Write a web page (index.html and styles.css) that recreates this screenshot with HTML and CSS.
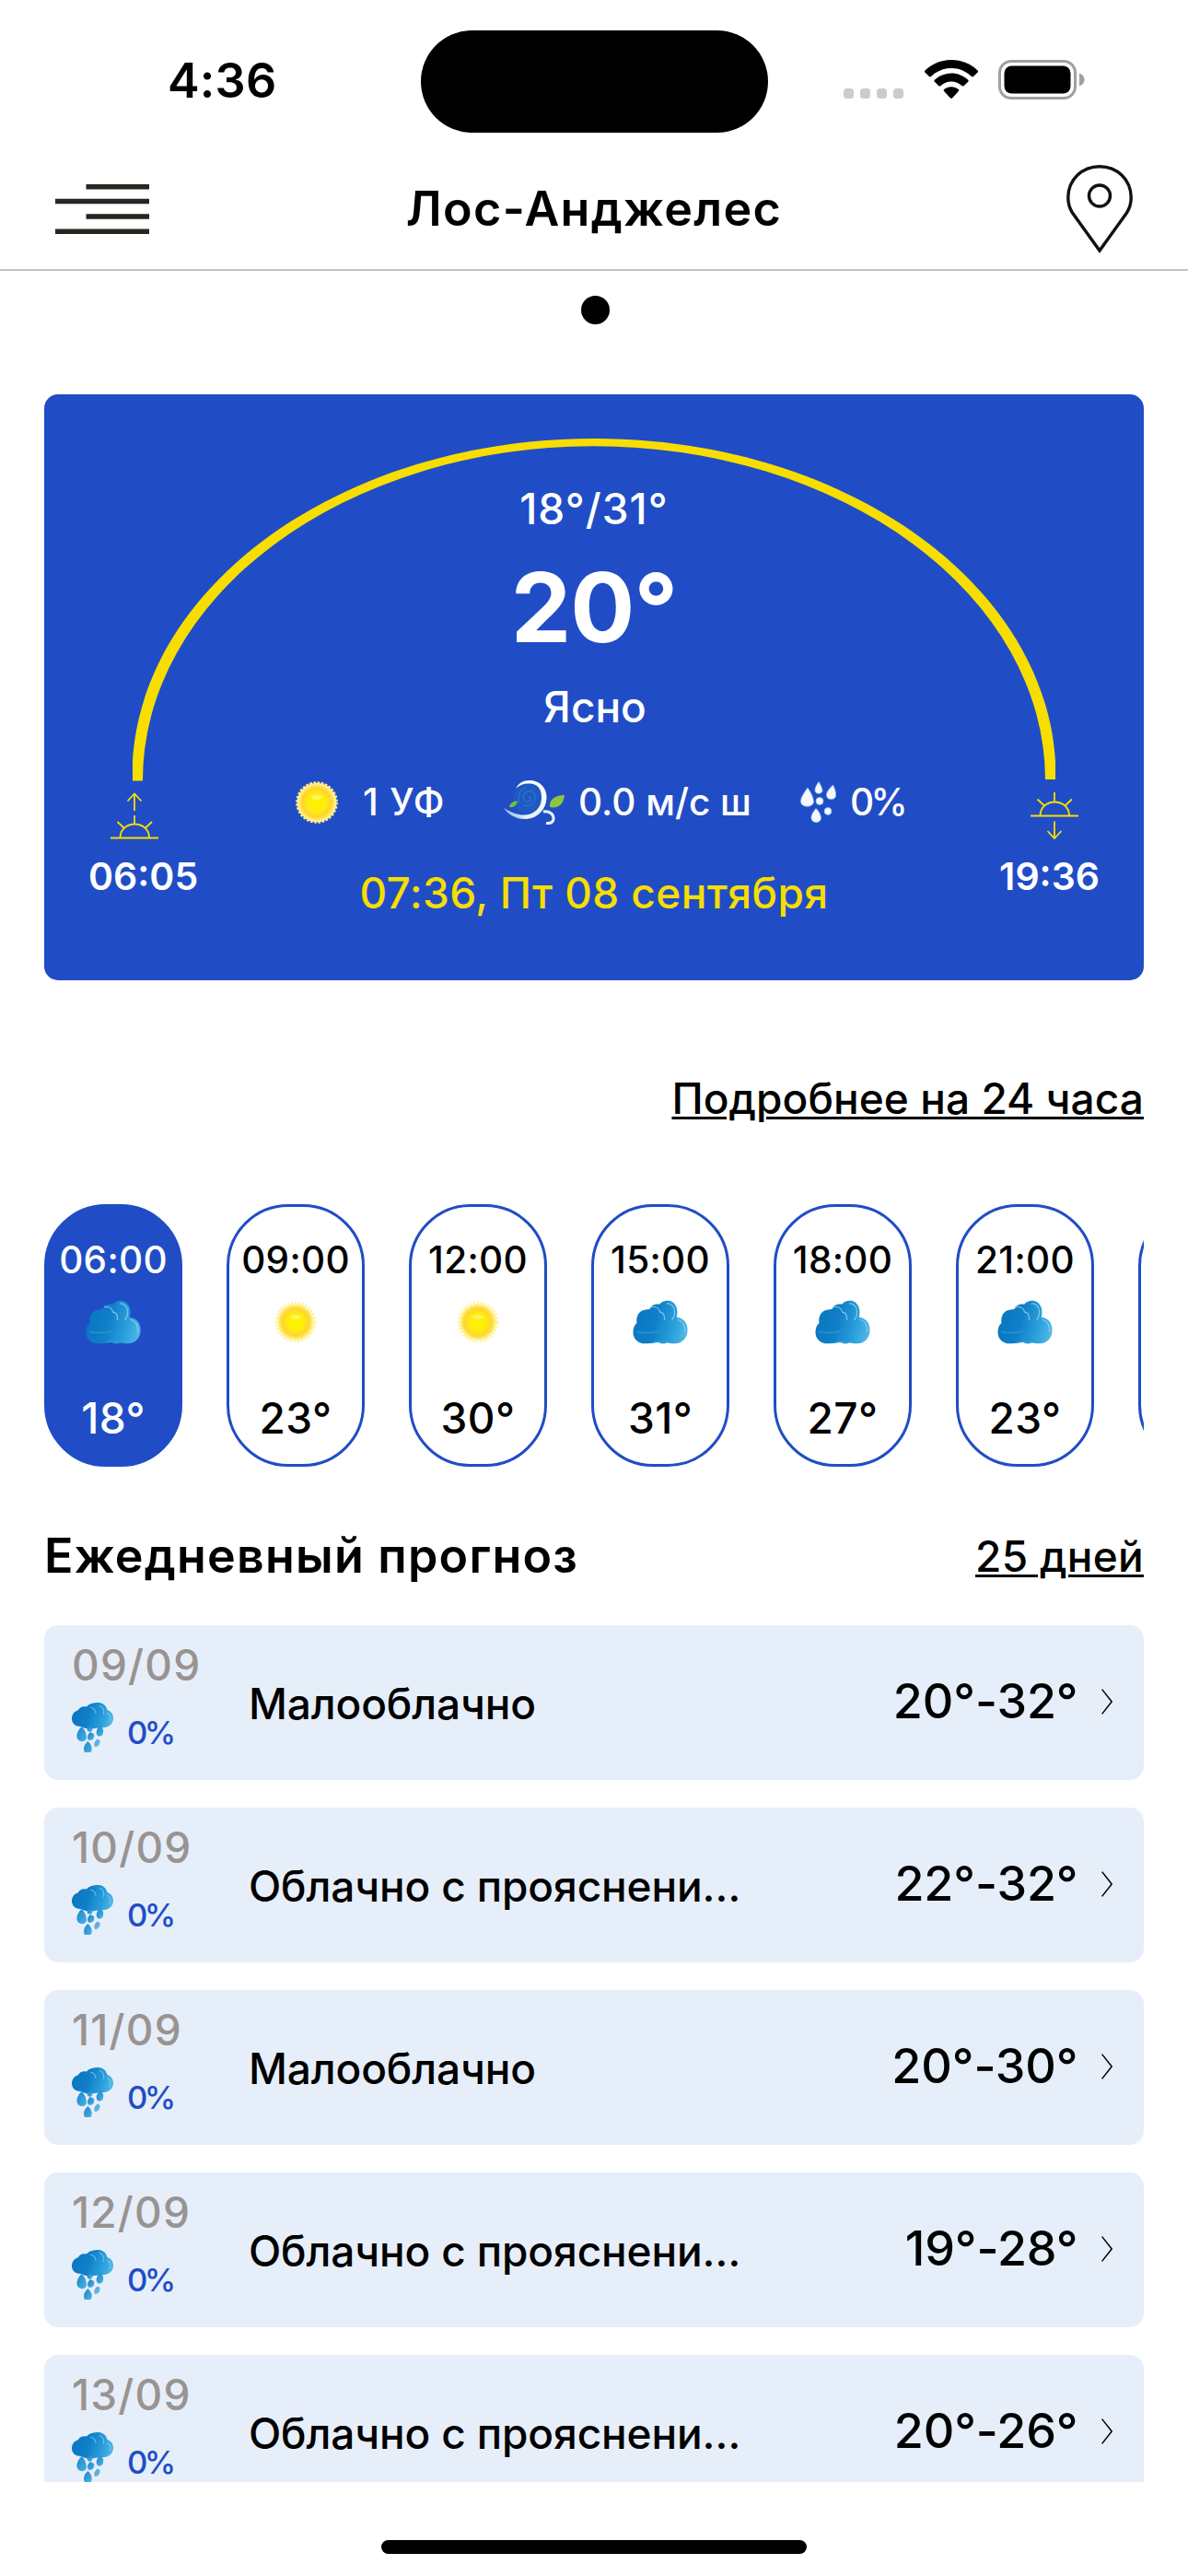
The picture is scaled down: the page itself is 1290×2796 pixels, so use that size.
FILE: index.html
```html
<!DOCTYPE html>
<html lang="ru">
<head>
<meta charset="utf-8">
<title>Погода</title>
<link rel="stylesheet" href="styles.css">
</head>
<body>
<svg width="0" height="0" class="defs">
  <defs>
    <radialGradient id="gSun">
      <stop offset="0" stop-color="#fff200"/>
      <stop offset=".5" stop-color="#ffee08"/>
      <stop offset=".78" stop-color="#ffd730"/>
      <stop offset="1" stop-color="#ffe55c"/>
    </radialGradient>
    <linearGradient id="gCloud" x1="0" y1=".4" x2="1" y2=".6">
      <stop offset="0" stop-color="#0a76c0"/>
      <stop offset=".4" stop-color="#0f7fc8"/>
      <stop offset=".75" stop-color="#2a9fdb"/>
      <stop offset="1" stop-color="#4fb6e6"/>
    </linearGradient>
    <linearGradient id="gDrop" x1="0" y1="0" x2="1" y2="1">
      <stop offset="0" stop-color="#1a83c8"/>
      <stop offset="1" stop-color="#4bb4e6"/>
    </linearGradient>
    <linearGradient id="gSwirl" x1="1" y1="0" x2="0" y2="1">
      <stop offset="0" stop-color="#ffffff"/>
      <stop offset=".7" stop-color="#e4f1fc"/>
      <stop offset="1" stop-color="#6fa6e6"/>
    </linearGradient>
    <symbol id="sun" viewBox="0 0 48 48">
      <circle cx="24" cy="24" r="21.300" fill="none" stroke="#ffe98a" stroke-width="3" stroke-dasharray="2.6 1.58"/>
      <circle cx="24" cy="24" r="21.300" fill="#ffee90"/>
      <circle cx="24" cy="24" r="19" fill="url(#gSun)"/>
      <circle cx="24" cy="24" r="15.500" fill="none" stroke="#ffcc28" stroke-width="2" stroke-dasharray="3 2.2" opacity=".6"/>
      <ellipse cx="24" cy="18.500" rx="6" ry="2.400" fill="#fff98c" opacity=".7"/>
    </symbol>
    <symbol id="sun-soft" viewBox="0 0 48 48">
      <circle cx="24" cy="24" r="20.800" fill="none" stroke="#fff3a0" stroke-width="3" stroke-dasharray="2.4 1.6"/>
      <circle cx="24" cy="24" r="19.500" fill="#fff08a"/>
      <circle cx="24" cy="24" r="17.800" fill="url(#gSun)"/>
      <circle cx="24" cy="24" r="14.600" fill="none" stroke="#ffd230" stroke-width="2" stroke-dasharray="2.6 2" opacity=".6"/>
      <ellipse cx="24" cy="18.500" rx="6" ry="2.200" fill="#fff98c" opacity=".7"/>
    </symbol>
    <symbol id="cloud" viewBox="0 0 60 48">
      <path fill="url(#gCloud)" d="M15 47.300C7 48 .5 43 .5 35.500C.5 31 1.500 27.500 4.500 25C3.500 19 6 12.500 12 11C15.500 10 17.500 10.500 19 9.500C20 5.500 24 4 29.500 4.500C32 1 37 0 41 1.200C46 3 48.500 7.500 48.500 14C48.300 16 48 17.500 47.800 18.800C55 19.500 60 25.500 59.500 33C59.500 41 54 47.500 45.500 47.300C42 47.600 39.500 46 37 46.500C34 48 30.500 47.500 28 46C24 46 20.500 47.500 15 47.300Z"/>
      <path fill="none" stroke="#8fd0f0" stroke-width="1.300" opacity=".8" d="M20 7.500C25 7 29 9 29.500 13C33 13.500 35 17 34.500 22M37 4C41 3 45.500 7 45.500 12C46 16 44 20 42.500 22M48.500 21C54 23 57.500 28 56.500 35"/>
      <path fill="none" stroke="#4aa8de" stroke-width="1" opacity=".7" d="M4 34.500C11 36 20 36 28 34M22 46.500C25 44.500 31 44.500 36 46.500"/>
    </symbol>
    <symbol id="rain" viewBox="0 0 45 54">
      <path fill="url(#gCloud)" d="M10 26C4 26 0 22.500 0 17.500C0 13 2.500 9.500 6.500 8.500C8.500 5 12 3.500 16 4.500C19 1 24 0 29 0C34 .5 37.500 3.500 38.500 8C43 9.500 45 13 45 17C45 22.500 41 26.500 35 27C31 28 27.500 27.300 24.500 28C20 29.500 15 28.500 10 26Z"/>
      <path fill="none" stroke="#80caf0" stroke-width="1.200" opacity=".75" d="M20 5C24 6 26 9 26 12M30 3C34 5 36 9 34 13M38 11C42 13 43 18 41 21"/>
      <g fill="url(#gDrop)">
        <path d="M10.500 26C6.500 30 5 34 5.500 37.500C6.500 43.500 15 43.500 16 38.500C16 33 14 29 10.500 26Z"/>
        <path d="M20 32C16.500 35 16 39 19 41C23.500 41 25 37.500 24 34Z"/>
        <path d="M31.500 25C26.500 28.500 25.500 33 28 36C32.500 38 35 34 34 29Z"/>
        <path d="M28 39.500C24.500 42 23.500 45 25 48C29 48.500 31 44.500 30.500 41Z" opacity=".75"/>
        <path d="M17.500 42C13 46 12 50 14 54H20.500C23 50.500 21.500 45.500 17.500 42Z"/>
        <circle cx="19.500" cy="29" r="2.800"/>
      </g>
    </symbol>
    <symbol id="chevron" viewBox="0 0 12 28">
      <path fill="none" stroke="#000" stroke-width="1.500" d="M.6 .6L11.200 14L.6 27.400"/>
    </symbol>
  </defs>
</svg>

<div class="screen">
  <div class="status">
    <div class="status-time">4:36</div>
    <div class="island"></div>
    <div class="status-icons">
      <div class="signal"><i></i><i></i><i></i><i></i></div>
      <svg class="wifi" width="58" height="43" viewBox="0 0 58 43">
        <path d="M29 0C40 0 50 4 57.500 11.500C58.200 12.200 58.200 13 57.600 13.600L53 18C52.400 18.600 51.600 18.500 51 18C45 12.300 37.500 9 29 9C20.500 9 13 12.300 7 18C6.400 18.500 5.600 18.600 5 18L.4 13.600C-.2 13 -.2 12.200 .5 11.500C8 4 18 0 29 0Z"/>
        <path d="M29 14.600C36 14.600 42.300 17.300 47.200 21.800C47.800 22.400 47.800 23.200 47.200 23.800L42.600 28.200C42 28.700 41.200 28.700 40.600 28.200C37.400 25.300 33.400 23.600 29 23.600C24.600 23.600 20.600 25.300 17.400 28.200C16.800 28.700 16 28.700 15.400 28.200L10.800 23.800C10.200 23.200 10.200 22.400 10.800 21.800C15.700 17.300 22 14.600 29 14.600Z"/>
        <path d="M29 29.200C32 29.200 34.800 30.300 36.900 32.100C37.500 32.700 37.500 33.500 36.900 34.100L30 41.400C29.400 42 28.600 42 28 41.400L21.100 34.100C20.500 33.500 20.500 32.700 21.100 32.100C23.200 30.300 26 29.200 29 29.200Z"/>
      </svg>
      <svg class="battery" width="94" height="43" viewBox="0 0 94 43">
        <rect x="1.500" y="1.500" width="82" height="40" rx="12.500" fill="none" stroke="#a0a0a0" stroke-width="3"/>
        <rect x="6.500" y="6.500" width="72" height="30" rx="8"/>
        <path fill="#a0a0a0" d="M88 14.500C91.500 15.800 93.600 18.500 93.600 21.500S91.500 27.200 88 28.500Z"/>
      </svg>
    </div>
  </div>

  <header class="header">
    <svg width="102" height="54" viewBox="0 0 102 54">
      <path stroke="#272721" stroke-width="5.500" d="M33.500 2.750H102M0 18.500H102M33.500 35H102M0 51.250H102"/>
    </svg>
    <h1 class="city">Лос-Анджелес</h1>
    <svg width="72" height="96" viewBox="0 0 72 96" fill="none" stroke="#111" stroke-width="3.400">
      <path d="M36 93L6.500 52C3 46.500 1.800 41 1.800 35.500C1.800 16 17 1.800 36 1.800S70.200 16 70.200 35.500C70.200 41 69 46.500 65.500 52Z"/>
      <circle cx="36" cy="33.500" r="11.500"/>
    </svg>
  </header>

  <div class="pager"><span class="pager-dot"></span></div>

  <main class="content">
    <section class="now">
      <svg class="arc" width="1002" height="372" viewBox="0 0 1002 372">
        <path fill="#f7de00" d="M0 371.500V350C12 155 232 0 501 0S990 155 1002 350V370H991A490 362.500 0 0 0 11 371.500Z"/>
      </svg>
      <div class="sun-side">
        <svg width="52" height="51" viewBox="0 0 52 51" fill="none" stroke="#f7de00" stroke-width="1.800">
          <path d="M0 49.500H52M10.500 49.500C10.500 29.500 42 29.500 42 49.500M26 25V34M7.500 32L15 39M45 32L37.500 39M26 20V1M18.500 9.500L26 1.500L33.500 9.500"/>
        </svg>
        <span class="sun-time">06:05</span>
      </div>
      <div class="now-main">
        <div class="now-range">18°/31°</div>
        <div class="now-temp">20°</div>
        <div class="now-state">Ясно</div>
        <div class="stats">
          <svg width="48" height="48"><use href="#sun"/></svg>
          <span class="stat-uv">1 УФ</span>
          <svg width="66" height="48" viewBox="0 0 66 48" fill="none">
            <circle cx="26" cy="20" r="16" fill="#1d5fc0" opacity=".75"/>
            <path stroke="#3a8ad6" stroke-width="1.500" opacity=".45" d="M27 18C30 18 30 23 26 23C21 23 20 17 23 14C27 10 34 12 34 18C34 26 28 29 21 27M17 24C14 16 18 10 24 8"/>
            <path fill="url(#gSwirl)" d="M13 9C16 3 21 0 28 0C39 0 47 8 46.500 19C46 32 36 42.500 22 42C12 41.500 5 37 0 30C8 35 15 37.500 22 37.500C33 37.500 40.500 30 41 20C41.500 10 37 4 29 3.500C22 3 17 5 13 9Z"/>
            <path stroke="#e8f2fb" stroke-width="3" d="M43 34C50 33 54.500 37 54 42C53.500 45.500 51 47 46 46.500"/>
            <path fill="#8fc53a" d="M50 29C49 21 55 16.500 66 16C65 25 60 31 50 29Z"/>
            <path fill="#78bf3c" d="M6 29C6.500 25 10 22.500 15 22.500C14 27 11 30 6 29Z"/>
          </svg>
          <span class="stat-wind">0.0 м/с ш</span>
          <svg width="39" height="46" viewBox="0 0 39 46" fill="#f4f9fe" stroke="#86bdf0" stroke-width=".8">
            <path d="M8 7C3 14 .5 18 .5 22C.5 29 14.500 29 14.500 22C14 17 12 13 8 7Z"/>
            <path d="M20 .5C17 5 15.500 8 16 10.500C17 14.500 23.500 14 24 10.500C24 7 22 4 20 .5Z"/>
            <path d="M35.500 4C31 8.500 28 12 28.500 16C29.500 21 38 20.500 38.500 16C39 12 37.500 8 35.500 4Z"/>
            <path d="M17 29.500C13.500 34 11.500 37 12 40.500C13 46 21.500 46 22.500 40.500C22.500 36 20 32.500 17 29.500Z"/>
            <circle cx="21" cy="21.500" r="4"/>
            <circle cx="30" cy="32.500" r="3.900"/>
          </svg>
          <span class="stat-rain">0%</span>
        </div>
        <div class="now-date">07:36, Пт 08 сентября</div>
      </div>
      <div class="sun-side sun-side-end">
        <svg width="52" height="51" viewBox="0 0 52 51" fill="none" stroke="#f7de00" stroke-width="1.800">
          <path d="M0 25.500H52M10.500 25.500C10.500 5.500 42 5.500 42 25.500M26 0V9.500M7.500 7.500L15 14.500M45 7.500L37.500 14.500M26 31.500V50M18.500 42L26 50L33.500 42"/>
        </svg>
        <span class="sun-time">19:36</span>
      </div>
    </section>

    <a class="more">Подробнее на 24 часа</a>

    <section class="hours">
      <div class="hour hour-active"><span class="hour-time">06:00</span><svg class="hour-icon"><use href="#cloud"/></svg><span class="hour-temp">18°</span></div>
      <div class="hour"><span class="hour-time">09:00</span><svg class="hour-icon"><use href="#sun-soft"/></svg><span class="hour-temp">23°</span></div>
      <div class="hour"><span class="hour-time">12:00</span><svg class="hour-icon"><use href="#sun-soft"/></svg><span class="hour-temp">30°</span></div>
      <div class="hour"><span class="hour-time">15:00</span><svg class="hour-icon"><use href="#cloud"/></svg><span class="hour-temp">31°</span></div>
      <div class="hour"><span class="hour-time">18:00</span><svg class="hour-icon"><use href="#cloud"/></svg><span class="hour-temp">27°</span></div>
      <div class="hour"><span class="hour-time">21:00</span><svg class="hour-icon"><use href="#cloud"/></svg><span class="hour-temp">23°</span></div>
      <div class="hour"></div>
    </section>

    <div class="daily-head">
      <h2 class="daily-title">Ежедневный прогноз</h2>
      <a class="daily-link">25 дней</a>
    </div>

    <section class="days">
      <div class="day">
        <div class="day-left"><span class="day-date">09/09</span><div class="day-rain"><svg width="45" height="54"><use href="#rain"/></svg><span>0%</span></div></div>
        <span class="day-text">Малооблачно</span><span class="day-temp">20°-32°</span><svg class="chevron"><use href="#chevron"/></svg>
      </div>
      <div class="day">
        <div class="day-left"><span class="day-date">10/09</span><div class="day-rain"><svg width="45" height="54"><use href="#rain"/></svg><span>0%</span></div></div>
        <span class="day-text">Облачно с прояснени…</span><span class="day-temp">22°-32°</span><svg class="chevron"><use href="#chevron"/></svg>
      </div>
      <div class="day">
        <div class="day-left"><span class="day-date">11/09</span><div class="day-rain"><svg width="45" height="54"><use href="#rain"/></svg><span>0%</span></div></div>
        <span class="day-text">Малооблачно</span><span class="day-temp">20°-30°</span><svg class="chevron"><use href="#chevron"/></svg>
      </div>
      <div class="day">
        <div class="day-left"><span class="day-date">12/09</span><div class="day-rain"><svg width="45" height="54"><use href="#rain"/></svg><span>0%</span></div></div>
        <span class="day-text">Облачно с прояснени…</span><span class="day-temp">19°-28°</span><svg class="chevron"><use href="#chevron"/></svg>
      </div>
      <div class="day">
        <div class="day-left"><span class="day-date">13/09</span><div class="day-rain"><svg width="45" height="54"><use href="#rain"/></svg><span>0%</span></div></div>
        <span class="day-text">Облачно с прояснени…</span><span class="day-temp">20°-26°</span><svg class="chevron"><use href="#chevron"/></svg>
      </div>
    </section>
  </main>

  <div class="home-bar"></div>
</div>
</body>
</html>
```
FILE: styles.css
```css
* { box-sizing: border-box; margin: 0; padding: 0; }
body {
  background: #fff;
  color: #000;
  font-family: Inter, "Liberation Sans", sans-serif;
  font-size: 46px;
  font-weight: 450;
  line-height: 60px;
}
svg { display: block; flex: none; }
span, a, h1, h2, div { white-space: nowrap; }
.defs { position: absolute; }
.screen { width: 1290px; height: 2796px; overflow: hidden; }

.status { display: grid; grid-template-columns: 457px 377px 1fr; height: 177px; }
.status-time { padding: 57.5px 0 0 182px; font-size: 52px; font-weight: 600; letter-spacing: .2px; }
.island { height: 111px; margin-top: 33px; border-radius: 56px; background: #000; }
.status-icons { display: flex; padding: 65px 0 0 82px; }
.signal { display: flex; gap: 7px; padding-top: 31px; margin-right: 23px; }
.signal i { width: 11px; height: 11px; border-radius: 3.5px; background: #ccc; }
.battery { margin-left: 22px; }

.header {
  display: flex;
  align-items: center;
  justify-content: space-between;
  height: 117px;
  padding: 0 60px 16px;
  border-bottom: 2px solid #c4c4c4;
}
.city { font-size: 52px; font-weight: 600; letter-spacing: 1.3px; margin-left: -30px; }
.pager { display: flex; justify-content: center; height: 134px; padding: 27px 0 0 2px; }
.pager-dot { width: 31px; height: 31px; border-radius: 50%; background: #000; }

.content { display: flex; flex-direction: column; padding: 0 48px; }

.now {
  position: relative;
  display: grid;
  grid-template-columns: 120px 1fr 120px;
  height: 636px;
  padding: 0 48px;
  border-radius: 15px;
  background: #204dc6;
  color: #fff;
}
.arc { position: absolute; left: 96px; top: 48px; }
.sun-side { display: flex; flex-direction: column; gap: 15px; padding-top: 432px; align-items: flex-start; }
.sun-side svg { margin-left: 24px; }
.sun-side-end { align-items: flex-end; }
.sun-side-end svg { margin: 0 23px 0 0; }
.sun-time { font-size: 41px; font-weight: 600; line-height: 50px; }
.now-main { text-align: center; }
.now-range { margin-top: 94px; letter-spacing: 1px; }
.now-temp { margin-top: 16.5px; font-size: 104px; font-weight: 700; line-height: 120px; letter-spacing: -1px; }
.now-state { margin-top: 18px; padding-left: 2px; }
.stats {
  display: grid;
  grid-template-columns: 74px 153px 81px 241px 54px auto;
  align-items: center;
  height: 60px;
  margin-top: 44.5px;
  padding-left: 104px;
  font-size: 40.5px;
  text-align: left;
}
.stat-uv { letter-spacing: .8px; }
.stat-rain { letter-spacing: -3.6px; }
.now-date { margin-top: 38px; color: #f7de00; letter-spacing: .4px; }

.more, .daily-link { text-decoration: underline 3px; text-underline-offset: 3px; }
.more { align-self: flex-end; margin-top: 97.5px; letter-spacing: .05px; }

.hours { display: flex; gap: 48px; margin-top: 85.5px; overflow: hidden; }
.hour {
  display: flex;
  flex: none;
  flex-direction: column;
  align-items: center;
  width: 150px;
  height: 285px;
  padding-top: 32.5px;
  border: 3px solid #204dc6;
  border-radius: 67px;
}
.hour-active { background: #204dc6; color: #fff; }
.hour-time { font-size: 40.5px; line-height: 50px; letter-spacing: .3px; }
.hour-icon { width: 60px; height: 48px; margin-top: 18.5px; }
.hour-temp { margin-top: 50px; letter-spacing: .4px; }

.daily-head { display: flex; justify-content: space-between; margin-top: 66.5px; }
.daily-title { font-size: 52px; font-weight: 600; letter-spacing: 1.2px; }
.daily-link { letter-spacing: .3px; }

.days { display: flex; flex-direction: column; gap: 30px; height: 930px; margin-top: 45.5px; overflow: hidden; }
.day {
  display: flex;
  flex: none;
  align-items: center;
  height: 168px;
  padding: 0 34.5px 0 30px;
  border-radius: 15px;
  background: #e6eef9;
}
.day-left { align-self: flex-start; width: 192px; padding-top: 13px; }
.day-date { display: block; color: #999391; letter-spacing: 1.2px; }
.day-rain { display: flex; gap: 15px; margin-top: 11px; color: #204dc6; font-size: 34.7px; letter-spacing: -3.6px; }
.day-rain span { padding-top: 2px; }
.day-text { flex: 1; padding-top: 1px; letter-spacing: -.15px; }
.day-temp { margin-right: 25px; font-size: 52px; font-weight: 480; padding-bottom: 3px; letter-spacing: -.1px; }
.chevron { width: 12px; height: 28px; margin-bottom: 2px; }

.home-bar { width: 462px; height: 15px; margin: 63px auto 0; border-radius: 8px; background: #000; }
```
